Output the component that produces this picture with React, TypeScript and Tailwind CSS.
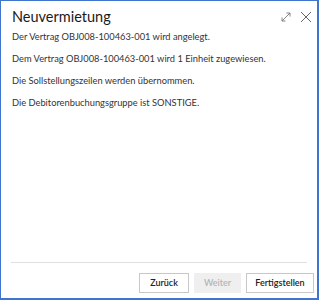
import React from "react";

export default function App() {
  return (
    <div className="w-[319px] h-[300px] bg-white border-l border-t border-r-2 border-b-2 border-[#3f74cf] flex flex-col" style={{ fontFamily: 'Lato, "Noto Sans", sans-serif' }}>
      <div className="flex items-start justify-between pl-[11px] pr-[5px] pt-[6px]">
        <div className="text-[14.5px] leading-[20px] text-[#1a1a1a]">Neuvermietung</div>
        <div className="flex items-center gap-[9px] pt-[4px]">
          <svg width="10" height="10" viewBox="0 0 10 10" fill="none" stroke="#777" strokeWidth="0.9">
            <path d="M1 9 L9 1 M5.5 1 H9 V4.5 M1 5.5 V9 H4.5" />
          </svg>
          <svg width="12" height="12" viewBox="0 0 12 12" fill="none" stroke="#666" strokeWidth="1">
            <path d="M1 1 L11 11 M11 1 L1 11" />
          </svg>
        </div>
      </div>
      <div className="flex flex-col gap-[10px] pl-[11px] pt-[4px] text-[9.3px] leading-[12px] text-[#333]">
        <p>Der Vertrag OBJ008-100463-001 wird angelegt.</p>
        <p>Dem Vertrag OBJ008-100463-001 wird 1 Einheit zugewiesen.</p>
        <p>Die Sollstellungszeilen werden übernommen.</p>
        <p>Die Debitorenbuchungsgruppe ist SONSTIGE.</p>
      </div>
      <div className="flex-1" />
      <div className="mx-[10px] border-t border-[#e0e0e0]" />
      <div className="flex justify-end gap-[5px] pr-[3px] pt-[10px] pb-[5px] text-[9px]">
        <button className="w-[50px] h-[20px] border border-[#c8c8c8] bg-white text-[#222] font-semibold">Zurück</button>
        <button className="w-[47px] h-[20px] bg-[#efefef] text-[#b5b5b5] font-semibold">Weiter</button>
        <button className="w-[68px] h-[20px] border border-[#c8c8c8] bg-white text-[#222] font-semibold">Fertigstellen</button>
      </div>
    </div>
  );
}
